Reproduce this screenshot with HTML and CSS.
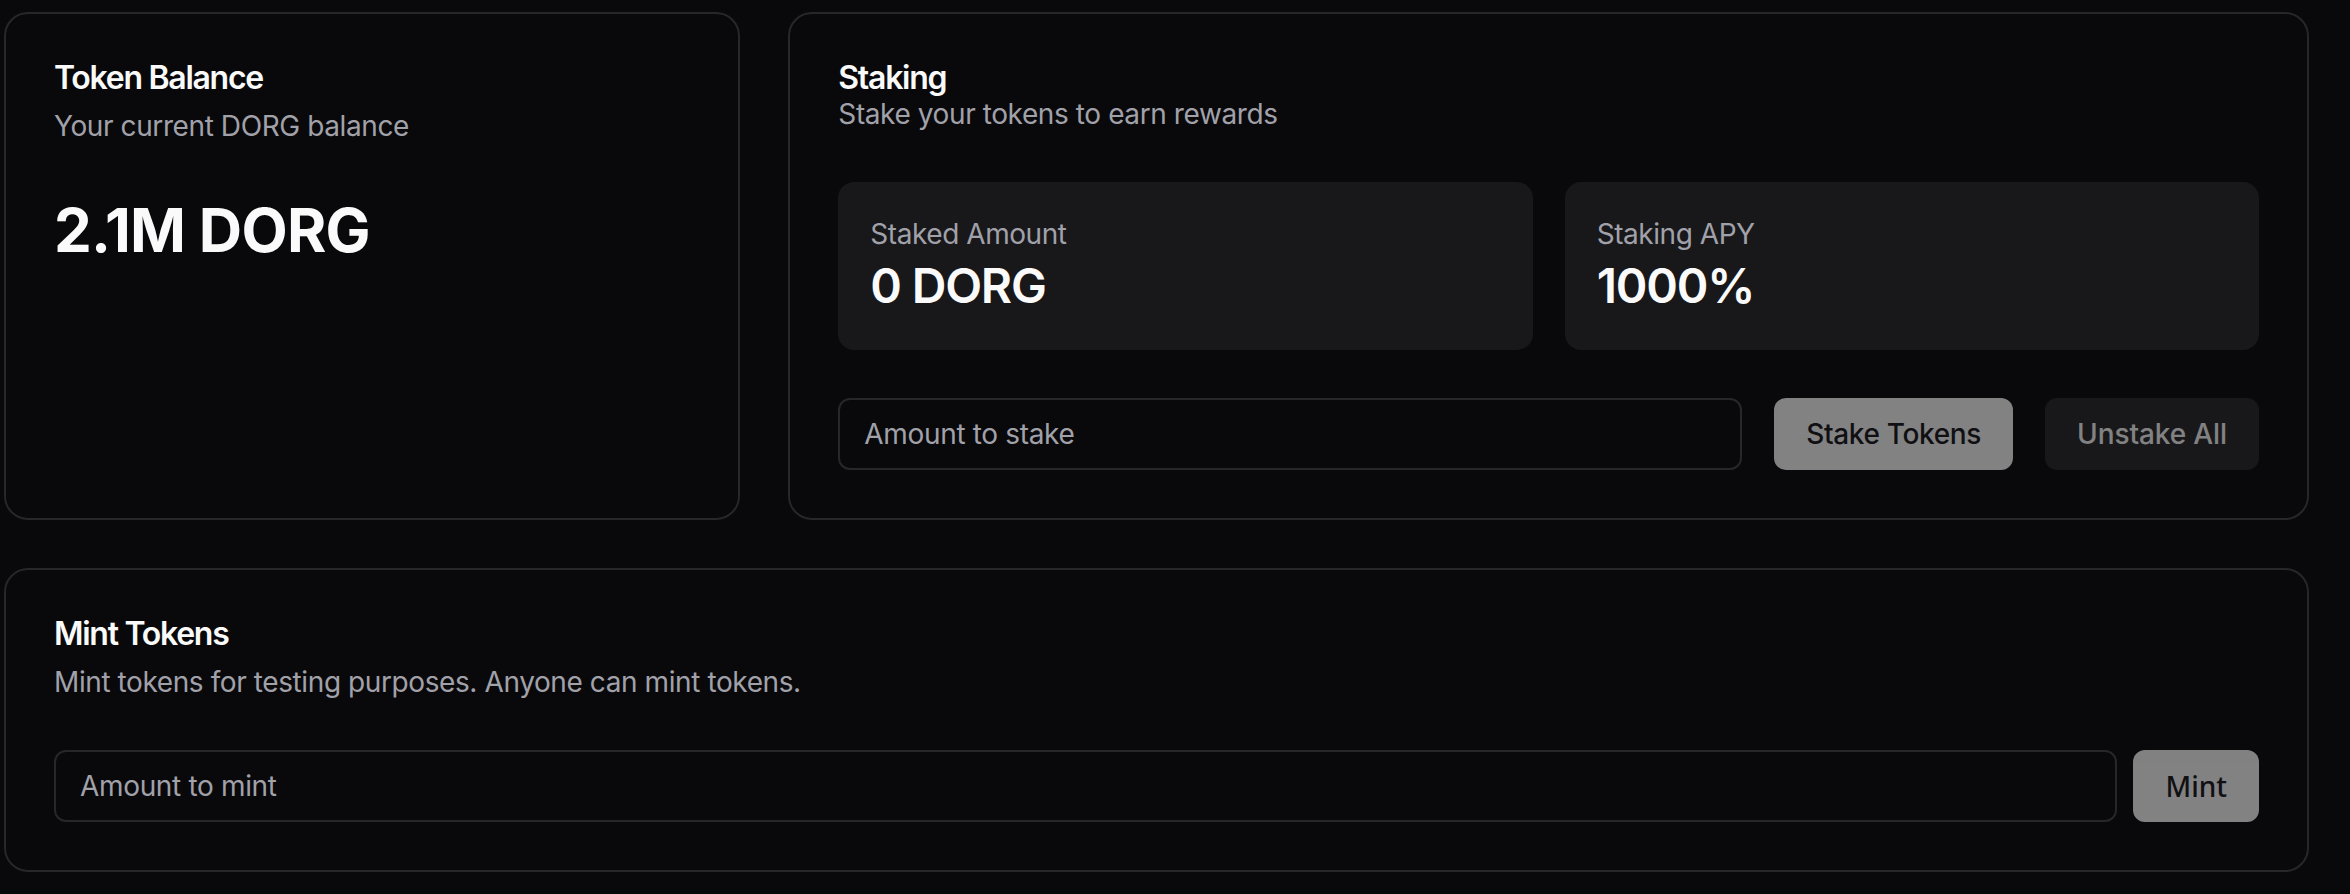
FILE: index.html
```html
<!DOCTYPE html>
<html lang="en">
<head>
<meta charset="utf-8">
<title>DORG Token</title>
<link rel="stylesheet" href="styles.css">
</head>
<body>
<main class="page">
  <div class="top-grid">
    <section class="card">
      <div class="card-header">
        <h3 class="card-title">Token Balance</h3>
        <p class="card-desc">Your current DORG balance</p>
      </div>
      <div class="card-content">
        <div class="balance">2.1M DORG</div>
      </div>
    </section>

    <section class="card span-2">
      <div class="card-header">
        <div class="header-text">
          <h3 class="card-title">Staking</h3>
          <p class="card-desc">Stake your tokens to earn rewards</p>
        </div>
      </div>
      <div class="card-content stack">
        <div class="stats">
          <div class="stat">
            <p class="stat-label">Staked Amount</p>
            <p class="stat-value">0 DORG</p>
          </div>
          <div class="stat">
            <p class="stat-label">Staking APY</p>
            <p class="stat-value">1000%</p>
          </div>
        </div>
        <div class="row gap-lg">
          <input class="input" type="number" placeholder="Amount to stake">
          <button class="btn btn-primary" disabled>Stake Tokens</button>
          <button class="btn btn-secondary" disabled>Unstake All</button>
        </div>
      </div>
    </section>
  </div>

  <section class="card mint-card">
    <div class="card-header">
      <h3 class="card-title">Mint Tokens</h3>
      <p class="card-desc">Mint tokens for testing purposes. Anyone can mint tokens.</p>
    </div>
    <div class="card-content">
      <div class="row gap-sm">
        <input class="input" type="number" placeholder="Amount to mint">
        <button class="btn btn-primary btn-alt-font" disabled>Mint</button>
      </div>
    </div>
  </section>
</main>
</body>
</html>
```

FILE: styles.css
```css
* {
  box-sizing: border-box;
}

html, body {
  margin: 0;
  padding: 0;
  background: #09090b;
}

body {
  font-family: "Inter", "Liberation Sans", sans-serif;
  color: #fafafa;
  letter-spacing: -0.012em;
  height: 894px;
  overflow: hidden;
}

.page {
  width: 2305px;
  margin-left: 4px;
  padding-top: 12px;
  display: flex;
  flex-direction: column;
  gap: 48px;
}

.top-grid {
  display: grid;
  grid-template-columns: repeat(3, 1fr);
  gap: 48px;
}

.span-2 {
  grid-column: span 2;
}

.card {
  border: 2px solid #27272a;
  border-radius: 24px;
  background: #09090b;
}

.card-header {
  padding: 48px;
  display: flex;
  flex-direction: column;
  gap: 12px;
}

.header-text {
  display: flex;
  flex-direction: column;
}

.card-title {
  margin: 0;
  font-size: 32px;
  line-height: 32px;
  font-weight: 600;
  letter-spacing: -0.04em;
  color: #fafafa;
}

.card-desc {
  margin: 0;
  font-size: 28px;
  line-height: 40px;
  letter-spacing: -0.0145em;
  color: #a1a1aa;
}

.card-content {
  padding: 0 48px 48px;
}

.stack {
  display: flex;
  flex-direction: column;
  gap: 48px;
}

.balance {
  font-size: 60px;
  line-height: 72px;
  font-weight: 700;
  letter-spacing: -0.012em;
}

.stats {
  display: grid;
  grid-template-columns: 1fr 1fr;
  gap: 32px;
}

.stat {
  background: #18181b;
  border-radius: 16px;
  padding: 32px;
}

.stat-label {
  margin: 0;
  font-size: 28px;
  line-height: 40px;
  letter-spacing: -0.016em;
  color: #a1a1aa;
}

.stat-value {
  margin: 0;
  font-size: 48px;
  line-height: 64px;
  font-weight: 600;
  letter-spacing: -0.025em;
}

.row {
  display: flex;
  align-items: center;
}

.gap-lg {
  gap: 32px;
}

.gap-sm {
  gap: 16px;
}

.input {
  flex: 1;
  min-width: 0;
  height: 72px;
  padding: 0 24px;
  border: 2px solid #27272a;
  border-radius: 12px;
  background: transparent;
  color: #fafafa;
  font-family: "Inter", "Liberation Sans", sans-serif;
  font-size: 28px;
  letter-spacing: -0.012em;
  outline: none;
}

.input::placeholder {
  color: #a1a1aa;
}

.input::-webkit-outer-spin-button,
.input::-webkit-inner-spin-button {
  -webkit-appearance: none;
  margin: 0;
}

.btn {
  height: 72px;
  padding: 0 32px;
  border: none;
  border-radius: 12px;
  font-family: "Inter", "Liberation Sans", sans-serif;
  font-size: 28px;
  font-weight: 500;
  letter-spacing: -0.012em;
  white-space: nowrap;
  opacity: 0.5;
}

.btn-primary {
  background: #fafafa;
  color: #18181b;
}

.btn-secondary {
  background: #27272a;
  color: #fafafa;
  letter-spacing: -0.004em;
}

.btn-alt-font {
  font-family: "Noto Sans", "Open Sans", sans-serif;
  letter-spacing: 0;
}
```
